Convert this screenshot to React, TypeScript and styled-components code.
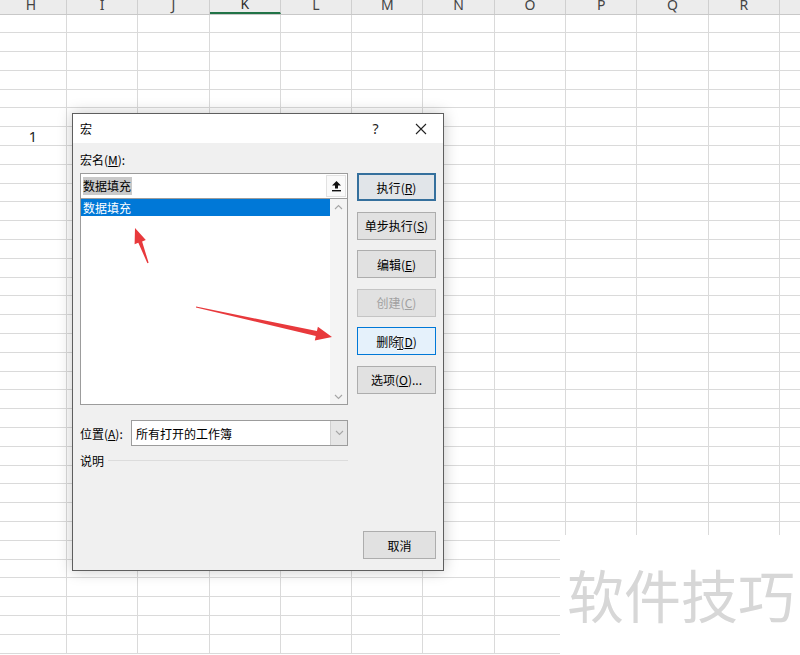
import React from 'react';
import styled, { createGlobalStyle } from 'styled-components';

const GlobalStyle = createGlobalStyle`
  * { box-sizing: border-box; }
  html, body { margin: 0; padding: 0; }
  body {
    width: 800px;
    height: 655px;
    overflow: hidden;
    background: #fff;
    font-family: "Noto Sans CJK SC", "Noto Sans", sans-serif;
  }
`;

const COLS = ['H', 'I', 'J', 'K', 'L', 'M', 'N', 'O', 'P', 'Q', 'R', 'S'];
const ROW_COUNT = 34;

const Page = styled.div`
  position: relative;
  width: 800px;
  height: 655px;
  overflow: hidden;
`;

const Sheet = styled.div`
  display: flex;
  flex-direction: column;
  margin-top: -4px;
  margin-left: -4.3px;
`;

const HeaderRow = styled.div`
  display: flex;
  height: 18.5px;
  background: #ececec;
  border-bottom: 1px solid #c8c8c8;
`;

const HeaderCell = styled.div<{ $active?: boolean }>`
  flex: 0 0 71.3px;
  height: 100%;
  border-right: 1px solid #cfcfcf;
  border-bottom: ${(p) => (p.$active ? '2px solid #217346' : 'none')};
  display: flex;
  align-items: center;
  justify-content: center;
  font-family: "Noto Sans", "Liberation Sans", sans-serif;
  font-size: 14px;
  color: ${(p) => (p.$active ? '#2b2b2b' : '#444')};
`;

const Row = styled.div`
  display: flex;
  height: 18.8px;
  border-bottom: 1px solid #dadada;
`;

const Cell = styled.div<{ $offset?: number }>`
  flex: 0 0 71.3px;
  height: 100%;
  border-right: 1px solid #dadada;
  display: flex;
  align-items: center;
  justify-content: center;
  padding-left: ${(p) => p.$offset ?? 0}px;
  font-family: "Noto Sans", "Liberation Sans", sans-serif;
  font-size: 14.5px;
  color: #222;
`;

const Dialog = styled.div`
  position: absolute;
  left: 72px;
  top: 113px;
  width: 372px;
  height: 458px;
  border: 1px solid #5e5e5e;
  background: #f0f0f0;
  box-shadow: 0 0 14px rgba(0, 0, 0, 0.22);
  display: flex;
  flex-direction: column;
  font-size: 12px;
  color: #000;
`;

const TitleBar = styled.div`
  height: 29px;
  background: #fff;
  display: flex;
  align-items: center;
  padding-left: 7px;
`;

const Title = styled.span`
  flex: 1;
  font-size: 12px;
`;

const TitleButton = styled.div`
  width: 45px;
  height: 100%;
  display: flex;
  align-items: center;
  justify-content: center;
  font-family: "Noto Sans", sans-serif;
  font-size: 14px;
  color: #222;
`;

const Body = styled.div`
  flex: 1;
  display: flex;
  flex-direction: column;
  padding: 9px 7px 11px 7px;
`;

const Main = styled.div`
  display: flex;
  gap: 9px;
`;

const LeftCol = styled.div`
  width: 268px;
  display: flex;
  flex-direction: column;
`;

const RightCol = styled.div`
  width: 79px;
  padding-top: 21px;
  display: flex;
  flex-direction: column;
  gap: 10.6px;
`;

const Label = styled.div`
  height: 16px;
  line-height: 16px;
  margin-bottom: 5px;
`;

const NameInput = styled.div`
  height: 26px;
  border: 1px solid #9c9c9c;
  background: #fff;
  display: flex;
  align-items: center;
  padding-left: 2px;
`;

const Selected = styled.span`
  background: #c9c9c9;
  line-height: 18px;
  padding: 0 1px 0 0;
`;

const Spacer = styled.div`
  flex: 1;
`;

const UpButton = styled.div`
  width: 20px;
  height: 22px;
  margin-right: 1px;
  border: 1px solid #e2e2e2;
  background: #fafafa;
  display: flex;
  align-items: center;
  justify-content: center;
`;

const ListBox = styled.div`
  height: 206px;
  border: 1px solid #9c9c9c;
  border-top: none;
  background: #fff;
  display: flex;
`;

const Items = styled.div`
  flex: 1;
`;

const ListItem = styled.div<{ $selected?: boolean }>`
  height: 17px;
  line-height: 17px;
  padding-left: 2px;
  background: ${(p) => (p.$selected ? '#0078d7' : 'transparent')};
  color: ${(p) => (p.$selected ? '#fff' : '#000')};
`;

const ScrollBar = styled.div`
  width: 17px;
  background: #f4f4f4;
  display: flex;
  flex-direction: column;
  justify-content: space-between;
  align-items: center;
  padding: 5px 0 4px;
`;

const FieldRow = styled.div`
  display: flex;
  align-items: center;
  margin-top: 15px;
  height: 26px;
`;

const FieldLabel = styled.div`
  width: 51px;
`;

const Select = styled.div`
  flex: 1;
  height: 26px;
  border: 1px solid #9c9c9c;
  background: #fff;
  display: flex;
  align-items: center;
  padding-left: 4px;
`;

const SelectText = styled.span`
  flex: 1;
`;

const DropButton = styled.div`
  width: 17px;
  height: 100%;
  background: #e6e6e6;
  border-left: 1px solid #cfcfcf;
  display: flex;
  align-items: center;
  justify-content: center;
`;

const GroupRow = styled.div`
  display: flex;
  align-items: center;
  height: 16px;
  margin-top: 6px;
`;

const GroupLine = styled.div`
  flex: 1;
  height: 1px;
  margin-left: 4px;
  background: #dcdcdc;
`;

type Variant = 'normal' | 'default' | 'hover';

const Button = styled.div<{ $variant?: Variant; $disabled?: boolean; $width?: number }>`
  width: ${(p) => p.$width ?? 79}px;
  height: 28px;
  display: flex;
  align-items: center;
  justify-content: center;
  font-size: 12px;
  color: ${(p) => (p.$disabled ? '#a0a0a0' : '#000')};
  background: ${(p) =>
    p.$variant === 'default' ? '#e1e5e9' : p.$variant === 'hover' ? '#e5f1fb' : '#e1e1e1'};
  border: ${(p) =>
    p.$variant === 'default'
      ? '2px solid #35709d'
      : p.$variant === 'hover'
      ? '1px solid #0078d7'
      : p.$disabled
      ? '1px solid #c4c4c4'
      : '1px solid #adadad'};
`;

const Footer = styled.div`
  margin-top: auto;
  display: flex;
  justify-content: flex-end;
`;

const Overlay = styled.svg`
  position: absolute;
  left: 0;
  top: 0;
  pointer-events: none;
`;

const Watermark = styled.div`
  position: absolute;
  left: 560px;
  top: 535px;
  width: 240px;
  height: 120px;
  background: #fff;
  padding: 30px 0 0 7px;
  font-family: "Noto Sans CJK SC", sans-serif;
  font-size: 57px;
  line-height: 1;
  color: #d7d7d7;
  white-space: nowrap;
`;

const Chevron = ({ up }: { up?: boolean }) => (
  <svg width="9" height="6" viewBox="0 0 9 6">
    <path
      d={up ? 'M1 5 L4.5 1.5 L8 5' : 'M1 1 L4.5 4.5 L8 1'}
      fill="none"
      stroke="#a6a6a6"
      strokeWidth="1.1"
    />
  </svg>
);

const UpArrowIcon = () => (
  <svg width="11" height="12" viewBox="0 0 11 12">
    <path d="M5.5 1 L10 5.5 L7 5.5 L7 8.5 L4 8.5 L4 5.5 L1 5.5 Z" fill="#111" />
    <rect x="1" y="10" width="9" height="1.4" fill="#111" />
  </svg>
);

const CloseIcon = () => (
  <svg width="12" height="12" viewBox="0 0 12 12">
    <path d="M1 1 L11 11 M11 1 L1 11" stroke="#222" strokeWidth="1.1" />
  </svg>
);

const buttons: { label: string; key: string; tail?: string; variant?: Variant; disabled?: boolean }[] = [
  { label: '执行', key: 'R', variant: 'default' },
  { label: '单步执行', key: 'S' },
  { label: '编辑', key: 'E' },
  { label: '创建', key: 'C', disabled: true },
  { label: '删除', key: 'D', variant: 'hover' },
  { label: '选项', key: 'O', tail: '...' },
];

export default function App() {
  return (
    <Page>
      <GlobalStyle />
      <Sheet>
        <HeaderRow>
          {COLS.map((c) => (
            <HeaderCell key={c} $active={c === 'K'}>
              {c}
            </HeaderCell>
          ))}
        </HeaderRow>
        {Array.from({ length: ROW_COUNT }).map((_, r) => (
          <Row key={r}>
            {COLS.map((c, i) =>
              r === 6 && i === 0 ? (
                <Cell key={c} $offset={4}>
                  1
                </Cell>
              ) : (
                <Cell key={c} />
              )
            )}
          </Row>
        ))}
      </Sheet>

      <Dialog>
        <TitleBar>
          <Title>宏</Title>
          <TitleButton>?</TitleButton>
          <TitleButton>
            <CloseIcon />
          </TitleButton>
        </TitleBar>
        <Body>
          <Main>
            <LeftCol>
              <Label>
                宏名(<u>M</u>):
              </Label>
              <NameInput>
                <Selected>数据填充</Selected>
                <Spacer />
                <UpButton>
                  <UpArrowIcon />
                </UpButton>
              </NameInput>
              <ListBox>
                <Items>
                  <ListItem $selected>数据填充</ListItem>
                </Items>
                <ScrollBar>
                  <Chevron up />
                  <Chevron />
                </ScrollBar>
              </ListBox>
              <FieldRow>
                <FieldLabel>
                  位置(<u>A</u>):
                </FieldLabel>
                <Select>
                  <SelectText>所有打开的工作簿</SelectText>
                  <DropButton>
                    <Chevron />
                  </DropButton>
                </Select>
              </FieldRow>
              <GroupRow>
                说明
                <GroupLine />
              </GroupRow>
            </LeftCol>
            <RightCol>
              {buttons.map((b) => (
                <Button key={b.key} $variant={b.variant} $disabled={b.disabled}>
                  {b.label}(<u>{b.key}</u>){b.tail}
                </Button>
              ))}
            </RightCol>
          </Main>
          <Footer>
            <Button $width={73}>取消</Button>
          </Footer>
        </Body>
      </Dialog>

      <Overlay width="800" height="655" viewBox="0 0 800 655">
        <polygon
          points="148.6,262.8 142.1,241.4 145.8,240 135,228 134.6,244.2 138.3,242.8 147.4,263.2"
          fill="#e8393c"
        />
        <polygon
          points="196.1,306.5 316.9,331.1 317.9,326.7 332,337 314.8,340.4 315.8,336 195.9,307.5"
          fill="#e8393c"
        />
        <path
          d="M397 337.5 H403 M400 337.5 V349.5 M397 349.5 H403"
          stroke="#fff"
          strokeWidth="2.6"
          fill="none"
        />
        <path
          d="M397 337.5 H403 M400 337.5 V349.5 M397 349.5 H403"
          stroke="#111"
          strokeWidth="1"
          fill="none"
        />
      </Overlay>

      <Watermark>软件技巧</Watermark>
    </Page>
  );
}
